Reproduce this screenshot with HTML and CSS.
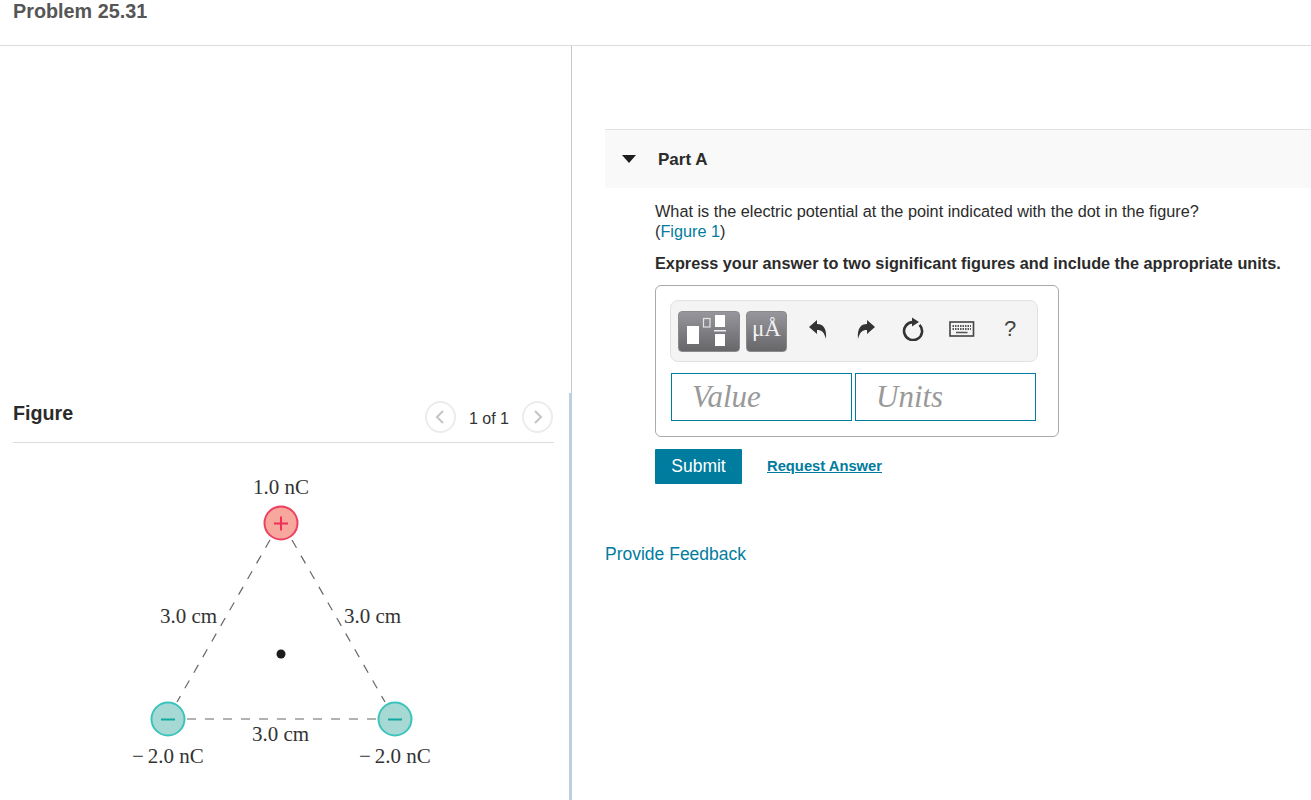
FILE: index.html
```html
<!DOCTYPE html>
<html lang="en">
<head>
  <meta charset="UTF-8" />
  <title>Problem 25.31</title>
  <link rel="stylesheet" href="styles.css">
</head>
<body>
  <header class="top-bar">
    <h1>Problem 25.31</h1>
  </header>

  <main class="layout">
    <section class="figure-pane">
      <div class="figure-head">
        <h2>Figure</h2>
        <div class="pager">
          <button class="pager-btn" type="button">
            <svg width="10" height="16" viewBox="0 0 10 16"><path d="M8 2 L2 8 L8 14" /></svg>
          </button>
          <span class="pager-text">1 of 1</span>
          <button class="pager-btn" type="button">
            <svg width="10" height="16" viewBox="0 0 10 16"><path d="M2 2 L8 8 L2 14" /></svg>
          </button>
        </div>
      </div>

      <svg class="diagram" width="320" height="310" viewBox="120 470 320 310">
        <g class="dash">
          <line x1="270" y1="540" x2="177" y2="702" />
          <line x1="292" y1="540" x2="385" y2="702" />
          <line x1="187" y1="719" x2="376" y2="719" />
        </g>
        <circle class="pos" cx="281" cy="523" r="16.5" />
        <path class="pos-sign" d="M274 523.5 H288 M281 516.5 V530.5" />
        <circle class="neg" cx="168" cy="719" r="16.5" />
        <path class="neg-sign" d="M161 719.5 H175" />
        <circle class="neg" cx="395" cy="719" r="16.5" />
        <path class="neg-sign" d="M388 719.5 H402" />
        <circle class="dot" cx="281" cy="654" r="4.5" />
        <text x="281" y="494" text-anchor="middle">1.0 nC</text>
        <text x="160" y="623">3.0 cm</text>
        <text x="344" y="623">3.0 cm</text>
        <text x="252" y="741">3.0 cm</text>
        <text x="132" y="763">−<tspan dx="4">2.0 nC</tspan></text>
        <text x="359" y="763">−<tspan dx="4">2.0 nC</tspan></text>
      </svg>
    </section>

    <section class="part-pane">
      <div class="part-bar">
        <span class="caret"></span>
        <h3>Part A</h3>
      </div>

      <div class="part-body">
        <p class="question">What is the electric potential at the point indicated with the dot in the figure?<br>(<a href="#">Figure 1</a>)</p>
        <p class="instruction">Express your answer to two significant figures and include the appropriate units.</p>

        <div class="answer-box">
          <div class="toolbar">
            <button class="tool-btn tool-templates" type="button">
              <svg width="62" height="41" viewBox="0 0 62 41">
                <rect x="9" y="15" width="12" height="18" fill="#fff" />
                <rect x="25.5" y="7.5" width="6.5" height="8.5" fill="none" stroke="#e4e4e4" stroke-width="1.2" />
                <rect x="37" y="4" width="10" height="12" fill="#fff" />
                <rect x="36" y="19" width="12" height="1.5" fill="#eee" />
                <rect x="37" y="23" width="10" height="12" fill="#fff" />
              </svg>
            </button>
            <button class="tool-btn tool-units" type="button">μÅ</button>
            <span class="tool-icon">
              <svg width="20" height="22" viewBox="0 0 20 22"><path d="M1 9 L9 2 V6 C15 6 19 10 18 21 C16 14 14 12 9 12 V16 Z" /></svg>
            </span>
            <span class="tool-icon">
              <svg width="20" height="22" viewBox="0 0 20 22"><path d="M19 9 L11 2 V6 C5 6 1 10 2 21 C4 14 6 12 11 12 V16 Z" /></svg>
            </span>
            <span class="tool-icon">
              <svg width="24" height="24" viewBox="0 0 24 24"><path class="reset-ring" d="M17.5 7.8 A9 9 0 1 1 11 5.1" /><path d="M10 0.5 L17 5 L10 9.5 Z" /></svg>
            </span>
            <span class="tool-icon">
              <svg width="26" height="16" viewBox="0 0 26 16">
                <rect class="key-frame" x="1" y="1" width="23.5" height="14" />
                <path class="key-rows" d="M3.5 5 H22 M3.5 8 H22" />
                <path class="key-space" d="M7 11.5 H18.5" />
              </svg>
            </span>
            <span class="tool-icon tool-help">?</span>
          </div>
          <div class="inputs">
            <input type="text" placeholder="Value" />
            <input type="text" placeholder="Units" />
          </div>
        </div>

        <div class="actions">
          <button class="btn-submit" type="button">Submit</button>
          <a class="request" href="#">Request Answer</a>
        </div>
      </div>

      <a class="feedback" href="#">Provide Feedback</a>
    </section>
  </main>
</body>
</html>
```

FILE: styles.css
```css
* {
  box-sizing: border-box;
}
html, body {
  height: 100%;
}
body {
  margin: 0;
  height: 800px;
  overflow: hidden;
  font-family: "Liberation Sans", Arial, sans-serif;
  color: #2b2b2b;
  background: #fff;
}
a {
  color: #007c9e;
  text-decoration: none;
}
.top-bar {
  height: 46px;
  padding-left: 13px;
  border-bottom: 1px solid #dcdcdc;
}
.top-bar h1 {
  margin: 0;
  font-size: 19.8px;
  line-height: 22px;
  font-weight: bold;
  color: #565656;
}
.layout {
  display: flex;
  height: 754px;
}
.figure-pane {
  position: relative;
  width: 572px;
  padding: 350px 17px 0 13px;
  border-right: 1px solid #c8c8c8;
}
/* blue part of the divider, lower half only */
.figure-pane::after {
  content: "";
  position: absolute;
  top: 347px;
  bottom: 0;
  right: -1px;
  width: 3px;
  background: #bcd0e3;
}
.figure-head {
  display: flex;
  justify-content: space-between;
  align-items: center;
  height: 47px;
  padding: 2px 0 7px;
  border-bottom: 1px solid #dcdcdc;
}
.figure-head h2 {
  margin: 0 0 6px;
  font-size: 19.7px;
  font-weight: bold;
  color: #2b2b2b;
}
.pager {
  display: flex;
  align-items: center;
  gap: 13px;
  margin-right: 1px;
}
.pager-btn {
  display: flex;
  align-items: center;
  justify-content: center;
  width: 31px;
  height: 32px;
  padding: 0;
  border: 2px solid #ececec;
  border-radius: 50%;
  background: #fff;
}
.pager-btn path {
  fill: none;
  stroke: #c4c4c4;
  stroke-width: 2;
}
.pager-text {
  font-size: 16px;
  color: #333;
  position: relative;
  top: 2px;
}
.diagram {
  display: block;
  margin: 27px 0 0 107px;
}
.diagram text {
  font-family: "Liberation Serif", "Times New Roman", serif;
  font-size: 21px;
  fill: #333;
}
.dash line {
  stroke: #666;
  stroke-width: 1.2;
  stroke-dasharray: 9 9;
}
.pos {
  fill: #f7a79c;
  stroke: #ee4060;
  stroke-width: 2;
}
.pos-sign {
  fill: none;
  stroke: #ee3058;
  stroke-width: 2;
}
.neg {
  fill: #a6d9d3;
  stroke: #3cc4bc;
  stroke-width: 2;
}
.neg-sign {
  fill: none;
  stroke: #12a8a0;
  stroke-width: 2;
}
.dot {
  fill: #1c1c1c;
}
.part-pane {
  flex: 1;
  padding: 83px 0 0 33px;
}
.part-bar {
  display: flex;
  align-items: center;
  height: 59px;
  padding: 2px 0 0 17px;
  background: #f9f9f9;
  border-top: 1px solid #e2e2e2;
}
.caret {
  width: 0;
  height: 0;
  margin: -2px 22px 0 0;
  border-left: 7px solid transparent;
  border-right: 7px solid transparent;
  border-top: 8px solid #1e1e1e;
}
.part-bar h3 {
  margin: 0;
  font-size: 17px;
  font-weight: bold;
  color: #2b2b2b;
}
.part-body {
  padding: 13px 0 0 50px;
}
.question {
  margin: 0;
  font-size: 16.25px;
  line-height: 20px;
}
.instruction {
  margin: 12px 0 0;
  font-size: 16.25px;
  line-height: 20px;
  font-weight: bold;
}
.answer-box {
  width: 404px;
  height: 152px;
  margin-top: 12px;
  padding: 14px 20px 0 14px;
  border: 1px solid #aaa;
  border-radius: 6px;
}
.toolbar {
  display: flex;
  align-items: center;
  height: 62px;
  padding-left: 7px;
  background: #f4f4f4;
  border: 1px solid #e2e2e2;
  border-radius: 8px;
}
.tool-btn {
  height: 41px;
  padding: 0;
  border: 1px solid #8a8a8a;
  border-radius: 4px;
  background: linear-gradient(#96969c, #67676a);
  color: #f2f2f2;
}
.tool-btn svg {
  display: block;
  margin: -1px;
}
.tool-templates {
  width: 62px;
  margin-right: 6px;
}
.tool-units {
  width: 41px;
  margin-right: 7px;
  padding-bottom: 4px;
  font-family: "Liberation Serif", serif;
  font-size: 23px;
  line-height: 22px;
}
.tool-icon {
  display: flex;
  align-items: center;
  justify-content: center;
  width: 48px;
  height: 41px;
  padding-bottom: 5px;
}
.tool-icon path {
  fill: #333;
}
.tool-icon .reset-ring {
  fill: none;
  stroke: #333;
  stroke-width: 2.6;
}
.key-frame {
  fill: #f4f4f4;
  stroke: #444;
  stroke-width: 1.6;
}
.tool-icon .key-rows {
  fill: none;
  stroke: #555;
  stroke-width: 2;
  stroke-dasharray: 1.5 1;
}
.tool-icon .key-space {
  fill: none;
  stroke: #555;
  stroke-width: 1.5;
}
.tool-help {
  font-size: 22px;
  color: #444;
}
.inputs {
  display: flex;
  gap: 3px;
  margin: 11px 0 0 1px;
}
.inputs input {
  width: 181px;
  height: 48px;
  padding: 0 0 0 20px;
  border: 1px solid #007c9e;
  border-radius: 0;
  background: #fff;
  font-family: "Liberation Serif", "Times New Roman", serif;
  font-style: italic;
  font-size: 31px;
  outline: none;
}
.inputs input::placeholder {
  color: #999;
  opacity: 1;
}
.actions {
  display: flex;
  align-items: center;
  margin-top: 12px;
}
.btn-submit {
  width: 87px;
  height: 35px;
  padding: 0;
  border: none;
  border-radius: 1px;
  background: #007c9e;
  color: #fff;
  font-family: inherit;
  font-size: 17.5px;
}
.request {
  margin: -2px 0 0 25px;
  font-size: 14.75px;
  font-weight: bold;
  text-decoration: underline;
}
.feedback {
  display: block;
  margin-top: 60px;
  font-size: 17.5px;
}
```
